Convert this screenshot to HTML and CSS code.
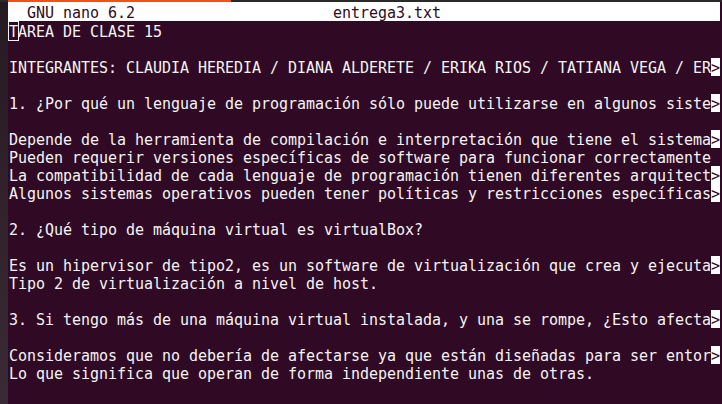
FILE: index.html
```html
<!DOCTYPE html>
<html lang="es">
<head>
<meta charset="utf-8">
<title>GNU nano 6.2 - entrega3.txt</title>
<link rel="stylesheet" href="styles.css">
</head>
<body>
<div class="topline"><div class="tab-accent"></div></div>
<div class="window">
  <div class="edge"></div>
  <div class="screen">
    <div class="titlebar"><span class="title-text">  GNU nano 6.2                      entrega3.txt</span></div>
    <div class="buffer">
      <div class="row"><span class="cursor">T</span>AREA DE CLASE 15</div>
      <div class="row"> </div>
      <div class="row">INTEGRANTES: CLAUDIA HEREDIA / DIANA ALDERETE / ERIKA RIOS / TATIANA VEGA / ER<span class="more">&gt;</span></div>
      <div class="row"> </div>
      <div class="row">1. ¿Por qué un lenguaje de programación sólo puede utilizarse en algunos siste<span class="more">&gt;</span></div>
      <div class="row"> </div>
      <div class="row">Depende de la herramienta de compilación e interpretación que tiene el sistema<span class="more">&gt;</span></div>
      <div class="row">Pueden requerir versiones específicas de software para funcionar correctamente</div>
      <div class="row">La compatibilidad de cada lenguaje de programación tienen diferentes arquitect<span class="more">&gt;</span></div>
      <div class="row">Algunos sistemas operativos pueden tener políticas y restricciones específicas<span class="more">&gt;</span></div>
      <div class="row"> </div>
      <div class="row">2. ¿Qué tipo de máquina virtual es virtualBox?</div>
      <div class="row"> </div>
      <div class="row">Es un hipervisor de tipo2, es un software de virtualización que crea y ejecuta<span class="more">&gt;</span></div>
      <div class="row">Tipo 2 de virtualización a nivel de host.</div>
      <div class="row"> </div>
      <div class="row">3. Si tengo más de una máquina virtual instalada, y una se rompe, ¿Esto afecta<span class="more">&gt;</span></div>
      <div class="row"> </div>
      <div class="row">Consideramos que no debería de afectarse ya que están diseñadas para ser entor<span class="more">&gt;</span></div>
      <div class="row">Lo que significa que operan de forma independiente unas de otras.</div>
    </div>
  </div>
</div>
</body>
</html>
```
FILE: styles.css
```css
html, body {
  margin: 0;
  padding: 0;
  width: 722px;
  height: 404px;
  overflow: hidden;
  background: #300a24;
}

body {
  display: flex;
  flex-direction: column;
  font-family: "DejaVu Sans Mono", "Liberation Mono", monospace;
  font-size: 15px;
  letter-spacing: -0.03px;
  color: #f4f4f4;
}

.topline {
  height: 2px;
  background: #2b2a2a;
  display: flex;
}

.tab-accent {
  margin-left: 8px;
  width: 223px;
  background: #e95420;
}

.window {
  flex: 1;
  display: flex;
}

.edge {
  width: 8px;
  background: linear-gradient(#261a22, #2f2029 40%, #3a2a35);
}

.screen {
  flex: 1;
  display: flex;
  flex-direction: column;
}

.titlebar {
  height: 19px;
  margin-right: 2px;
  background: #ffffff;
  color: #300a24;
  padding-left: 1px;
  overflow: hidden;
}

.title-text {
  display: block;
  white-space: pre;
  line-height: 22px;
}

.buffer {
  padding-left: 1px;
  padding-top: 1px;
  display: flex;
  flex-direction: column;
}

.row {
  height: 18px;
  line-height: 20px;
  white-space: pre;
}

.cursor {
  display: inline-block;
  width: 9px;
  height: 18px;
  line-height: 20px;
  outline: 1px solid #f4f4f4;
  vertical-align: top;
}

.more {
  display: inline-block;
  width: 9px;
  height: 18px;
  line-height: 20px;
  background: #ffffff;
  color: #300a24;
  vertical-align: top;
}
```
